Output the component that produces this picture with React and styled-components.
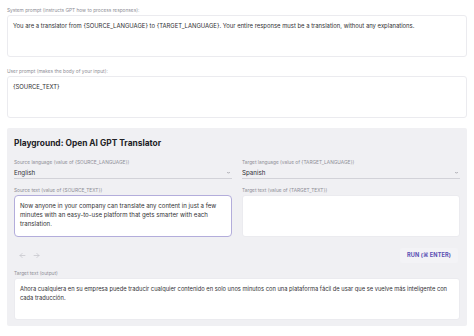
import React from 'react';
import styled, { createGlobalStyle } from 'styled-components';

const GlobalStyle = createGlobalStyle`
  body {
    margin: 0;
    background: #ffffff;
    font-family: Inter, "Noto Sans", "Liberation Sans", sans-serif;
    color: #2f2f33;
  }
`;

const Page = styled.div`
  width: 474px;
  padding: 7px;
  box-sizing: border-box;
`;

const Field = styled.div`
  display: flex;
  flex-direction: column;
  margin-bottom: ${({ gap }) => gap || 0}px;
`;

const Label = styled.div`
  font-size: 4.8px;
  line-height: 6px;
  color: #8e8e96;
  margin-bottom: 2px;
`;

const Box = styled.div`
  box-sizing: border-box;
  height: ${({ h }) => h || 42}px;
  padding: 5px 5px;
  background: #ffffff;
  border: 1px solid ${({ focused }) => (focused ? '#b3addb' : '#ebebef')};
  border-radius: ${({ focused }) => (focused ? 4 : 3)}px;
  font-size: ${({ size }) => size || 5.9}px;
  line-height: 9px;
  color: #2f2f33;
`;

const Panel = styled.section`
  background: #f0f0f3;
  border-radius: 2px;
  padding: 10px 7px 6px;
`;

const Title = styled.h2`
  margin: 0 0 10px;
  font-size: 8.4px;
  line-height: 11px;
  font-weight: 700;
  color: #222226;
`;

const Columns = styled.div`
  display: grid;
  grid-template-columns: 1fr 1fr;
  column-gap: 10px;
  row-gap: 8px;
`;

const Select = styled.div`
  display: flex;
  align-items: center;
  justify-content: space-between;
  height: 10px;
  padding-bottom: 1px;
  border-bottom: 1px solid #d2d2d8;
  font-size: 6.2px;
  color: #2f2f33;
`;

const Chevron = styled.svg`
  width: 5px;
  height: 5px;
  margin-right: 1px;
`;

const Toolbar = styled.div`
  display: flex;
  align-items: center;
  justify-content: space-between;
  height: 16px;
  margin: 10px 0 7px;
  padding-left: 5px;
`;

const Arrows = styled.div`
  display: flex;
  gap: 7px;
`;

const Arrow = styled.svg`
  width: 7px;
  height: 7px;
`;

const RunButton = styled.button`
  height: 15px;
  width: 58px;
  border: none;
  border-radius: 2px;
  background: #f3f3f6;
  color: #5a4fb3;
  font-family: inherit;
  font-size: 5.6px;
  font-weight: 700;
  letter-spacing: 0.1px;
  padding: 0;
  margin-right: 2px;
`;

const ArrowIcon = ({ dir }) => (
  <Arrow viewBox="0 0 10 10" fill="none" stroke="#c6c6cc" strokeWidth="1.1" strokeLinecap="round" strokeLinejoin="round">
    {dir === 'left' ? (
      <path d="M8.5 5H1.5M4.5 2L1.5 5L4.5 8" />
    ) : (
      <path d="M1.5 5H8.5M5.5 2L8.5 5L5.5 8" />
    )}
  </Arrow>
);

const LangSelect = ({ value }) => (
  <Select>
    <span>{value}</span>
    <Chevron viewBox="0 0 10 10" fill="none" stroke="#8a8a92" strokeWidth="1.4">
      <path d="M2.5 4L5 6.5L7.5 4" />
    </Chevron>
  </Select>
);

export default function App() {
  return (
    <Page>
      <GlobalStyle />
      <Field gap={11}>
        <Label>System prompt (instructs GPT how to process responses):</Label>
        <Box>
          You are a translator from {'{SOURCE_LANGUAGE}'} to {'{TARGET_LANGUAGE}'}. Your entire response must be a translation, without any explanations.
        </Box>
      </Field>
      <Field gap={10}>
        <Label>User prompt (makes the body of your input):</Label>
        <Box>{'{SOURCE_TEXT}'}</Box>
      </Field>
      <Panel>
        <Title>Playground: Open AI GPT Translator</Title>
        <Columns>
          <Field>
            <Label>Source language (value of {'{SOURCE_LANGUAGE}'})</Label>
            <LangSelect value="English" />
          </Field>
          <Field>
            <Label>Target language (value of {'{TARGET_LANGUAGE}'})</Label>
            <LangSelect value="Spanish" />
          </Field>
          <Field>
            <Label>Source text (value of {'{SOURCE_TEXT}'})</Label>
            <Box focused size={6.1}>
              Now anyone in your company can translate any content in just a few minutes with an easy-to-use platform that gets smarter with each translation.
            </Box>
          </Field>
          <Field>
            <Label>Target text (value of {'{TARGET_TEXT}'})</Label>
            <Box />
          </Field>
        </Columns>
        <Toolbar>
          <Arrows>
            <ArrowIcon dir="left" />
            <ArrowIcon dir="right" />
          </Arrows>
          <RunButton>RUN (⌘ ENTER)</RunButton>
        </Toolbar>
        <Field>
          <Label>Target text (output)</Label>
          <Box size={5.75}>
            Ahora cualquiera en su empresa puede traducir cualquier contenido en solo unos minutos con una plataforma fácil de usar que se vuelve más inteligente con cada traducción.
          </Box>
        </Field>
      </Panel>
    </Page>
  );
}
